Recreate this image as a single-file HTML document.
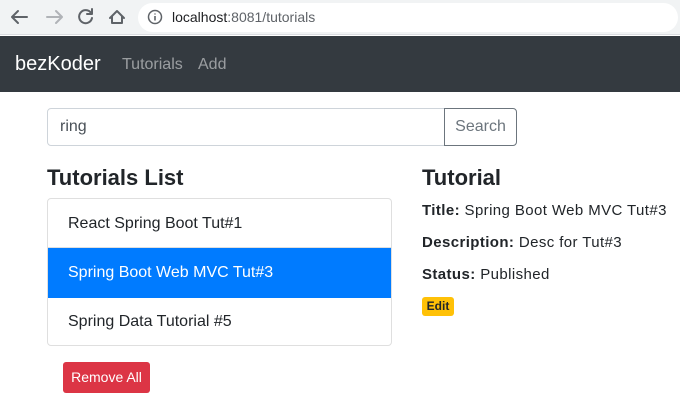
<!DOCTYPE html>
<html><head><style>
*{box-sizing:border-box;margin:0;padding:0}
body{width:680px;height:420px;overflow:hidden;background:#fff;font-family:"Liberation Sans",sans-serif;position:relative;color:#212529}
.abs{position:absolute}
</style></head><body>
<div class="abs" style="left:0;top:0;width:680px;height:35px;background:#f1f3f4;border-bottom:1px solid #dadce0"></div>
<svg class="abs" style="left:0;top:0" width="140" height="35">
<g fill="none" stroke-width="2" stroke-linecap="round" stroke-linejoin="round">
<path d="M27 17H12M18 11l-6 6 6 6" stroke="#5f6368"/>
<path d="M47 17h15M56 11l6 6-6 6" stroke="#b0b3b7"/>
<path d="M91 13a6.5 6.5 0 1 0 1 5" stroke="#5f6368"/><path d="M92 9v5h-5" stroke="#5f6368"/>
<path d="M110 18l7-7 7 7M112 16v7h10v-7" stroke="#5f6368"/>
</g></svg>
<div class="abs" style="left:138px;top:3px;width:540px;height:29px;background:#fff;border-radius:15px"></div>
<svg class="abs" style="left:147px;top:9px" width="16" height="16"><circle cx="8" cy="8" r="6.5" fill="none" stroke="#5f6368" stroke-width="1.5"/><path d="M8 7v4.5M8 4.5v1" stroke="#5f6368" stroke-width="1.6"/></svg>
<div class="abs" style="left:172px;top:9px;font-size:14px;color:#202124">localhost<span style="color:#5f6368">:8081/tutorials</span></div>
<div class="abs" style="left:0;top:36px;width:680px;height:56px;background:#343a40"></div>
<div class="abs" style="left:15px;top:53px;font-size:20px;color:#fff">bezKoder</div>
<div class="abs" style="left:122px;top:56px;font-size:16px;color:rgba(255,255,255,.5)">Tutorials</div>
<div class="abs" style="left:198px;top:56px;font-size:16px;color:rgba(255,255,255,.5)">Add</div>
<div class="abs" style="left:47px;top:108px;width:398px;height:38px;border:1px solid #ced4da;border-radius:4px 0 0 4px"></div>
<div class="abs" style="left:60px;top:118px;font-size:16px;color:#495057">ring</div>
<div class="abs" style="left:444px;top:108px;width:73px;height:38px;border:1px solid #6c757d;border-radius:0 4px 4px 0;font-size:16px;color:#6c757d;text-align:center;line-height:36px">Search</div>
<div class="abs" style="left:47px;top:165px;font-size:22px;font-weight:bold">Tutorials List</div>
<div class="abs" style="left:47px;top:198px;width:345px;height:148px;border:1px solid #dfdfdf;border-radius:4px;overflow:hidden">
<div style="height:49px;border-bottom:1px solid #dfdfdf;padding-left:20px;line-height:49px;font-size:16px">React Spring Boot Tut#1</div>
<div style="height:50px;background:#007bff;color:#fff;padding-left:20px;line-height:50px;font-size:16px">Spring Boot Web MVC Tut#3</div>
<div style="height:48px;padding-left:20px;line-height:48px;font-size:16px">Spring Data Tutorial #5</div>
</div>
<div class="abs" style="left:63px;top:362px;width:87px;height:31px;background:#dc3545;border-radius:3px;color:#fff;font-size:14px;text-align:center;line-height:31px">Remove All</div>
<div class="abs" style="left:422px;top:165px;font-size:22px;font-weight:bold">Tutorial</div>
<div class="abs" style="left:422px;top:202px;font-size:15px;letter-spacing:.4px"><b>Title:</b> Spring Boot Web MVC Tut#3</div>
<div class="abs" style="left:422px;top:234px;font-size:15px;letter-spacing:.4px"><b>Description:</b> Desc for Tut#3</div>
<div class="abs" style="left:422px;top:266px;font-size:15px;letter-spacing:.4px"><b>Status:</b> Published</div>
<div class="abs" style="left:422px;top:297px;width:32px;height:19px;background:#ffc107;border-radius:3px;font-size:12px;font-weight:bold;text-align:center;line-height:19px">Edit</div>
</body></html>
